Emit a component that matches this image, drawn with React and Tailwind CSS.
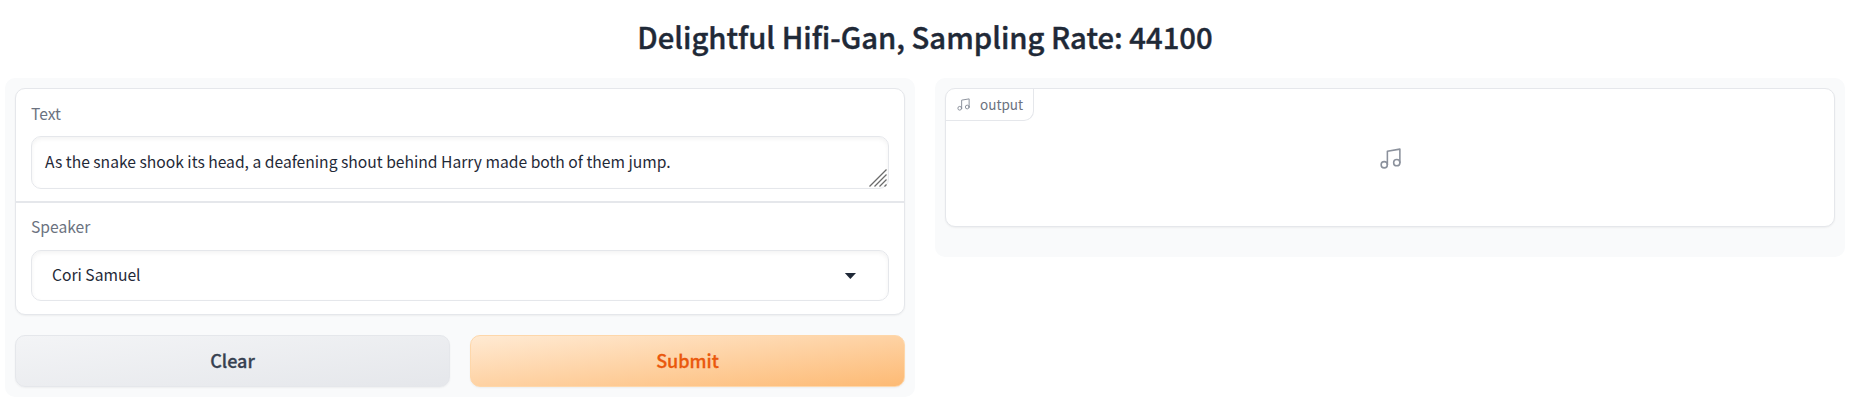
import React from "react";

function MusicIcon({ className, strokeWidth }) {
  return (
    <svg
      viewBox="0 0 24 24"
      fill="none"
      stroke="currentColor"
      strokeWidth={strokeWidth}
      strokeLinecap="round"
      strokeLinejoin="round"
      className={className}
    >
      <path d="M9 18V5l12-2v13" />
      <circle cx="6" cy="18" r="3" />
      <circle cx="18" cy="16" r="3" />
    </svg>
  );
}

function ResizeHandle() {
  return (
    <svg
      viewBox="0 0 18 18"
      className="absolute right-[1px] bottom-[1px] h-[18px] w-[18px]"
      stroke="#6b6b6b"
      strokeWidth="1.3"
    >
      <path d="M0.5 17.5L17.5 0.5M5.5 17.5L17.5 5.5M10.5 17.5L17.5 10.5M15.5 17.5L17.5 15.5" />
    </svg>
  );
}

export default function App() {
  return (
    <main className="h-[411px] w-full bg-white pt-[14px] pr-[9px] pl-[5px] font-['Noto_Sans_CJK_SC',sans-serif] text-gray-800">
      <h1 className="flex h-[45px] items-center justify-center text-[29.25px] font-medium whitespace-nowrap text-[#1f2937] [-webkit-text-stroke:0.4px_#1f2937]">
        Delightful Hifi-Gan, Sampling Rate: 44100
      </h1>
      <div className="mt-[19px] flex items-start gap-5">
        <section className="flex h-[319px] flex-1 flex-col rounded-[10px] bg-[#f9fafb] p-[10px]">
          <div className="h-[227px] overflow-hidden rounded-[10px] border border-[#e5e7eb] bg-white shadow-[0_1px_2px_rgba(0,0,0,0.05)]">
            <div className="h-[113px] border-b border-[#e5e7eb] px-[15px] pt-[11px]">
              <div className="h-[27px] text-[15.65px] leading-[27px] text-[#6b7280]">Text</div>
              <div className="relative mt-[9px] flex h-[53px] items-center rounded-[10px] border border-[#e5e7eb] px-[13px] pb-[2px] text-[15.65px] whitespace-nowrap text-[#1f2937] shadow-[inset_0_2px_4px_rgba(0,0,0,0.05)]">
                As the snake shook its head, a deafening shout behind Harry made both of them jump.
                <ResizeHandle />
              </div>
            </div>
            <div className="h-[113px] border-t border-[#e5e7eb] px-[15px] pt-[10px]">
              <div className="h-[27px] text-[15.65px] leading-[27px] text-[#6b7280]">Speaker</div>
              <div className="mt-[10px] flex h-[51px] items-center justify-between rounded-[10px] border border-[#e5e7eb] pr-[32px] pl-[20px] text-[15.65px] text-[#1f2937] shadow-[inset_0_2px_4px_rgba(0,0,0,0.05)]">
                <span className="pb-[2px]">Cori Samuel</span>
                <svg viewBox="0 0 12 6" className="h-[6px] w-[12px]" fill="#1f2937">
                  <path d="M0.8 0H12L6.4 6z" />
                </svg>
              </div>
            </div>
          </div>
          <div className="mt-5 flex gap-5">
            <button className="h-[52px] flex-1 rounded-[10px] border border-[#e5e7eb] bg-[linear-gradient(to_bottom_right,#f3f4f6,#e5e7eb)] pb-[2px] text-[18px] font-medium text-[#374151] shadow-[0_1px_2px_rgba(0,0,0,0.05)] [-webkit-text-stroke:0.3px_#374151]">
              Clear
            </button>
            <button className="h-[52px] flex-1 rounded-[10px] border border-[#fed7aa] bg-[linear-gradient(to_bottom_right,#ffead3,#fdba74)] pb-[2px] text-[18px] font-medium text-[#ea580c] shadow-[0_1px_2px_rgba(0,0,0,0.05)] [-webkit-text-stroke:0.3px_#ea580c]">
              Submit
            </button>
          </div>
        </section>
        <section className="h-[179px] flex-1 rounded-[10px] bg-[#f9fafb] p-[10px]">
          <div className="relative flex h-[139px] items-center justify-center overflow-hidden rounded-[10px] border border-[#e5e7eb] bg-white pt-[2px] shadow-[0_1px_2px_rgba(0,0,0,0.05)]">
            <div className="absolute top-0 left-0 flex h-[32px] w-[88px] items-center rounded-br-[10px] border-r border-b border-[#e5e7eb] pl-[10px] text-[13.5px] text-[#6b7280]">
              <MusicIcon className="mr-[9px] h-[15px] w-[15px] opacity-80" strokeWidth={1.5} />
              output
            </div>
            <MusicIcon className="h-[25px] w-[25px] text-[#8b919c]" strokeWidth={1.5} />
          </div>
        </section>
      </div>
    </main>
  );
}
